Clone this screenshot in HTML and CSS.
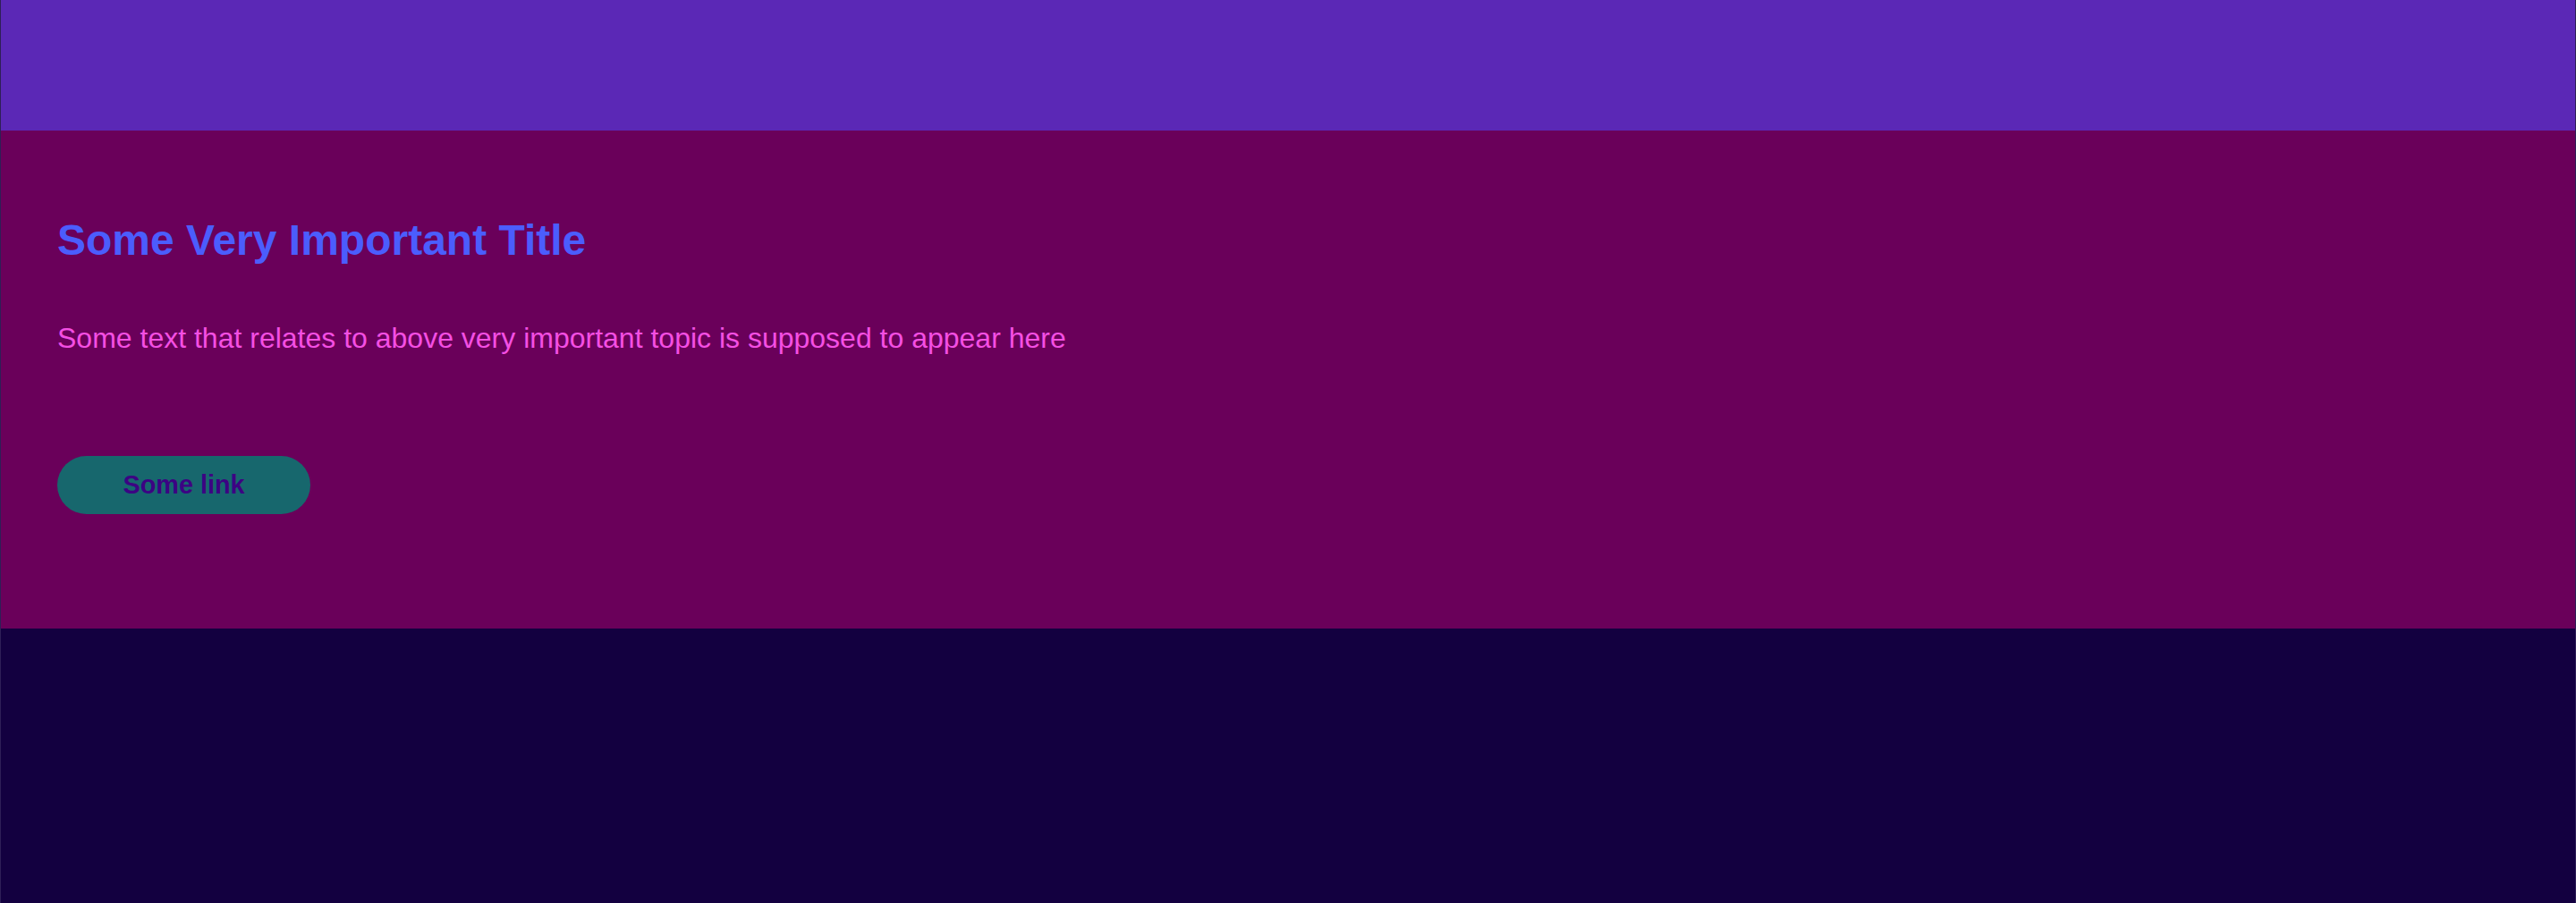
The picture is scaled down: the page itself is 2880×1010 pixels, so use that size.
FILE: index.html
```html
<!DOCTYPE html>
<html lang="en">
<head>
<meta charset="utf-8">
<title>Some Very Important Title</title>
<link rel="stylesheet" href="styles.css">
</head>
<body>
<div class="page">
  <header class="topbar"></header>
  <section class="hero">
    <h1 class="hero-title">Some Very Important Title</h1>
    <p class="hero-text">Some text that relates to above very important topic is supposed to appear here</p>
    <a class="hero-link" href="#">Some link</a>
  </section>
  <footer class="bottom"></footer>
</div>
</body>
</html>
```

FILE: styles.css
```css
html, body {
  margin: 0;
  padding: 0;
  height: 100%;
}
body {
  background: #130040;
  font-family: "Liberation Sans", Arial, sans-serif;
}
.page {
  display: flex;
  flex-direction: column;
  min-height: 100%;
  border-left: 1px solid rgba(255,255,255,0.12);
  border-right: 1px solid rgba(255,255,255,0.12);
  box-sizing: border-box;
}
.topbar {
  height: 146px;
  background: #5b28b6;
}
.hero {
  background: #6a005a;
  padding: 95px 63px 128px;
  display: flex;
  flex-direction: column;
  align-items: flex-start;
}
.hero-title {
  margin: 0;
  font-size: 48px;
  line-height: 56px;
  font-weight: bold;
  color: #4b5dfd;
}
.hero-text {
  margin: 61px 0 0;
  font-size: 32px;
  line-height: 40px;
  color: #f44fe3;
}
.hero-link {
  margin-top: 112px;
  width: 283px;
  height: 65px;
  border-radius: 33px;
  background: #17676d;
  color: #3c0383;
  font-size: 28.8px;
  font-weight: bold;
  text-decoration: none;
  display: flex;
  align-items: center;
  justify-content: center;
}
.bottom {
  flex: 1;
  background: #130040;
}
```
